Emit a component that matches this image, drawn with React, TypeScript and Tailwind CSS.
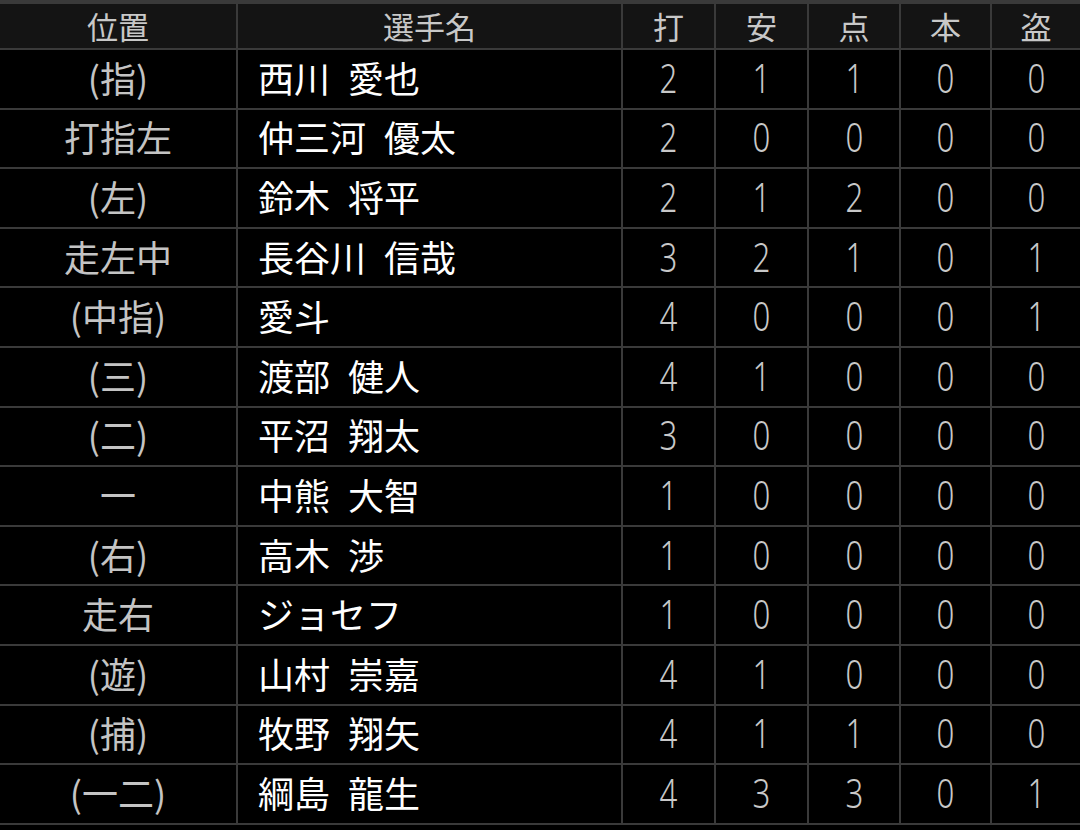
import React from 'react';

type Row = { pos: string; name: string; ab: number; h: number; rbi: number; hr: number; sb: number };

const rows: Row[] = [
  { pos: '(指)', name: '西川 愛也', ab: 2, h: 1, rbi: 1, hr: 0, sb: 0 },
  { pos: '打指左', name: '仲三河 優太', ab: 2, h: 0, rbi: 0, hr: 0, sb: 0 },
  { pos: '(左)', name: '鈴木 将平', ab: 2, h: 1, rbi: 2, hr: 0, sb: 0 },
  { pos: '走左中', name: '長谷川 信哉', ab: 3, h: 2, rbi: 1, hr: 0, sb: 1 },
  { pos: '(中指)', name: '愛斗', ab: 4, h: 0, rbi: 0, hr: 0, sb: 1 },
  { pos: '(三)', name: '渡部 健人', ab: 4, h: 1, rbi: 0, hr: 0, sb: 0 },
  { pos: '(二)', name: '平沼 翔太', ab: 3, h: 0, rbi: 0, hr: 0, sb: 0 },
  { pos: '一', name: '中熊 大智', ab: 1, h: 0, rbi: 0, hr: 0, sb: 0 },
  { pos: '(右)', name: '高木 渉', ab: 1, h: 0, rbi: 0, hr: 0, sb: 0 },
  { pos: '走右', name: 'ジョセフ', ab: 1, h: 0, rbi: 0, hr: 0, sb: 0 },
  { pos: '(遊)', name: '山村 崇嘉', ab: 4, h: 1, rbi: 0, hr: 0, sb: 0 },
  { pos: '(捕)', name: '牧野 翔矢', ab: 4, h: 1, rbi: 1, hr: 0, sb: 0 },
  { pos: '(一二)', name: '綱島 龍生', ab: 4, h: 3, rbi: 3, hr: 0, sb: 1 },
];

const headers = ['位置', '選手名', '打', '安', '点', '本', '盗'];

const cjk = "font-['Noto_Sans_CJK_JP','Noto_Sans',sans-serif]";

const Num: React.FC<{ v: number }> = ({ v }) => (
  <div className="bg-black h-[57.6px] flex items-center justify-center">
    <span className="inline-block font-['Noto_Sans',sans-serif] font-light text-[40px] leading-none text-[#c8c8c8] scale-x-[0.78] -translate-y-[1px]">
      {v}
    </span>
  </div>
);

const App: React.FC = () => {
  return (
    <div className={`w-[1080px] h-[830px] bg-black overflow-hidden ${cjk}`}>
      <div className="bg-[#3a3a3a] pt-[4px] pb-[2px] grid grid-cols-[236px_383px_91px_91px_90px_89px_88px] gap-[2px]">
        {headers.map((h) => (
          <div key={h} className="bg-[#141414] h-[44px] pb-[2px] flex items-center justify-center text-[31px] leading-none text-[#c8c8c8]">
            {h}
          </div>
        ))}
        {rows.map((r, i) => (
          <React.Fragment key={i}>
            <div className="bg-black h-[57.6px] pb-[4px] flex items-center justify-center text-[36px] leading-none text-[#c4c4c4]">
              {r.pos}
            </div>
            <div className="bg-black h-[57.6px] pb-[4px] flex items-center pl-5 text-[36px] leading-none text-white">
              {r.name.split(' ').map((part, j) => (
                <span key={j} className={j > 0 ? 'ml-[18px]' : ''}>{part}</span>
              ))}
            </div>
            <Num v={r.ab} />
            <Num v={r.h} />
            <Num v={r.rbi} />
            <Num v={r.hr} />
            <Num v={r.sb} />
          </React.Fragment>
        ))}
      </div>
    </div>
  );
};

export default App;
